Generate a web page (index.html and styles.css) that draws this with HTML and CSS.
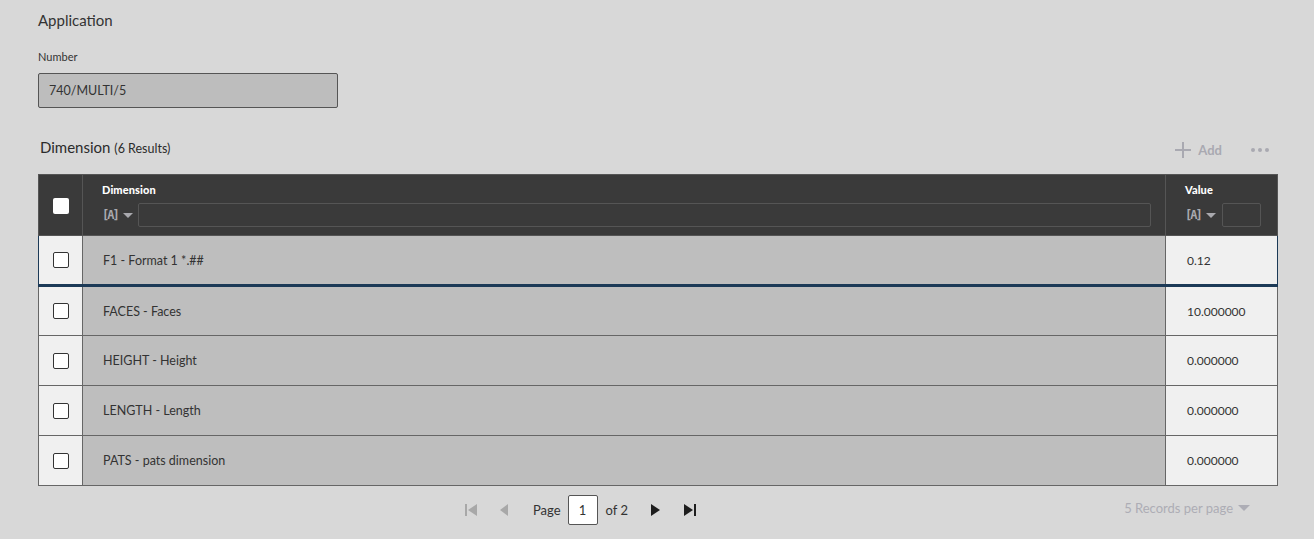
FILE: index.html
```html
<!DOCTYPE html>
<html>
<head>
<meta charset="utf-8">
<link rel="stylesheet" href="styles.css">
</head>
<body>
<div class="page">
  <h1 class="title">Application</h1>
  <label class="field-label">Number</label>
  <div class="field-input">740/MULTI/5</div>

  <div class="grid-bar">
    <div class="grid-title">Dimension <span class="count">(6 Results)</span></div>
    <div class="grid-actions">
      <span class="add">
        <svg width="18" height="18" viewBox="0 0 18 18"><path d="M9 1v16M1 9h16" stroke="#a9a9b1" stroke-width="2" fill="none"/></svg>
        Add
      </span>
      <span class="more">
        <svg width="20" height="6" viewBox="0 0 20 6"><circle cx="3" cy="3" r="2" fill="#a9a9b1"/><circle cx="10" cy="3" r="2" fill="#a9a9b1"/><circle cx="17" cy="3" r="2" fill="#a9a9b1"/></svg>
      </span>
    </div>
  </div>

  <table class="grid">
    <thead>
      <tr>
        <th class="c-check"><span class="hbox"></span></th>
        <th class="c-dim">
          <div class="h-label">Dimension</div>
          <div class="h-filter"><span class="fa">[A]</span><span class="tri"></span><span class="finput wide"></span></div>
        </th>
        <th class="c-val">
          <div class="h-label">Value</div>
          <div class="h-filter"><span class="fa">[A]</span><span class="tri"></span><span class="finput small"></span></div>
        </th>
      </tr>
    </thead>
    <tbody>
      <tr class="selected">
        <td class="c-check"><span class="box"></span></td>
        <td class="c-dim">F1 - Format 1 *.##</td>
        <td class="c-val">0.12</td>
      </tr>
      <tr>
        <td class="c-check"><span class="box"></span></td>
        <td class="c-dim">FACES - Faces</td>
        <td class="c-val">10.000000</td>
      </tr>
      <tr>
        <td class="c-check"><span class="box"></span></td>
        <td class="c-dim">HEIGHT - Height</td>
        <td class="c-val">0.000000</td>
      </tr>
      <tr>
        <td class="c-check"><span class="box"></span></td>
        <td class="c-dim">LENGTH - Length</td>
        <td class="c-val">0.000000</td>
      </tr>
      <tr>
        <td class="c-check"><span class="box"></span></td>
        <td class="c-dim">PATS - pats dimension</td>
        <td class="c-val">0.000000</td>
      </tr>
    </tbody>
  </table>

  <div class="pager">
    <div class="pager-center">
      <svg class="pi" width="12" height="12" viewBox="0 0 12 12"><rect x="0" y="0" width="2" height="12" fill="#a8a8a8"/><path d="M12 0v12L3 6z" fill="#a8a8a8"/></svg>
      <svg class="pi prev" width="8" height="12" viewBox="0 0 8 12"><path d="M8 0v12L0 6z" fill="#a8a8a8"/></svg>
      <span class="ptext">Page</span>
      <span class="pinput">1</span>
      <span class="ptext">of 2</span>
      <svg class="pi next" width="9" height="12" viewBox="0 0 9 12"><path d="M0 0v12L9 6z" fill="#1e1e1e"/></svg>
      <svg class="pi last" width="12" height="12" viewBox="0 0 12 12"><path d="M0 0v12L9 6z" fill="#1e1e1e"/><rect x="10" y="0" width="2" height="12" fill="#1e1e1e"/></svg>
    </div>
    <div class="per-page">5 Records per page <span class="tri light"></span></div>
  </div>
</div>
</body>
</html>
```

FILE: styles.css
```css
* { box-sizing: border-box; }
html, body { margin: 0; padding: 0; }
body {
  background: #d8d8d8;
  font-family: "Source Sans Pro", Lato, "Noto Sans", sans-serif;
  color: #333;
  width: 1314px;
  height: 539px;
  overflow: hidden;
}
.page {
  padding: 10px 36px 0 38px;
}
.title {
  margin: 0;
  font-size: 15px;
  font-weight: normal;
  line-height: 20px;
  color: #333;
}
.field-label {
  display: block;
  margin-top: 19px;
  font-size: 11px;
  line-height: 15px;
  color: #333;
}
.field-input {
  margin-top: 9px;
  width: 300px;
  height: 35px;
  background: #bdbdbd;
  border: 1px solid #555;
  border-radius: 2px;
  padding: 0 10px;
  font-size: 12.5px;
  line-height: 33px;
  color: #333;
}
.grid-bar {
  display: flex;
  justify-content: space-between;
  align-items: center;
  margin-top: 26px;
  height: 26px;
  padding-left: 2px;
}
.grid-title {
  font-size: 15px;
  color: #2b2b2b;
}
.count { font-size: 12.5px; }
.grid-actions {
  display: flex;
  align-items: center;
  gap: 28px;
  padding-right: 8px;
  padding-top: 6px;
}
.add {
  display: flex;
  align-items: center;
  gap: 6px;
  font-size: 13px;
  font-weight: bold;
  color: #a9a9b1;
}
.more { display: flex; align-items: center; }
.grid {
  margin-top: 14px;
  width: 1240px;
  border-collapse: collapse;
  table-layout: fixed;
}
.grid th {
  background: #3a3a3a;
  color: #fff;
  text-align: left;
  vertical-align: top;
  height: 61px;
  padding: 0;
  border: 1px solid #555;
}
.grid thead tr { border: 1px solid #3a3a3a; }
.c-check { width: 44px; }
.c-val { width: 112px; }
th.c-check { vertical-align: middle !important; text-align: center !important; }
.hbox {
  display: inline-block;
  width: 16px;
  height: 16px;
  background: #fff;
  border-radius: 2px;
  margin-top: 4px;
}
th.c-dim { padding: 8px 14px 0 19px !important; }
th.c-val { padding: 8px 16px 0 19px !important; }
.h-label {
  font-size: 11px;
  font-weight: 900;
  line-height: 13px;
  letter-spacing: 0.1px;
}
.h-filter {
  display: flex;
  align-items: center;
  margin-top: 7px;
  height: 24px;
}
.fa {
  font-family: "DejaVu Sans Mono", monospace;
  font-size: 12px;
  font-weight: bold;
  color: #a9a9ae;
  letter-spacing: -2px;
}
.tri {
  display: inline-block;
  width: 0;
  height: 0;
  border-left: 5px solid transparent;
  border-right: 5px solid transparent;
  border-top: 5px solid #a9a9ae;
  margin-left: 5px;
}
.finput {
  display: block;
  height: 24px;
  border: 1px solid #555;
  border-radius: 2px;
  margin-left: 5px;
}
.finput.wide { flex: 1; }
.finput.small { width: 44px; margin-left: 6px; }
.grid td {
  height: 50px;
  border: 1px solid #666;
  padding: 0;
  font-size: 12.5px;
  color: #333;
  vertical-align: middle;
}
.grid td.c-check { background: #f0f0f0; text-align: center; }
.grid td.c-dim { background: #bebebe; padding-left: 20px; }
.grid td.c-val { background: #f0f0f0; padding-left: 21px; font-size: 12px; }
.box {
  display: inline-block;
  width: 16px;
  height: 16px;
  background: #fff;
  border: 1px solid #333;
  border-radius: 2px;
  vertical-align: middle;
}
.grid tr.selected td {
  border-top: 1px solid #1c3a57;
  border-bottom: 3px solid #1c3a57;
}
.grid tr.selected td.c-check { border-left: 1px solid #1c3a57; }
.grid tr.selected td.c-val { border-right: 1px solid #1c3a57; }
.pager {
  position: relative;
  display: flex;
  align-items: center;
  height: 48px;
  width: 1240px;
  padding-left: 427px;
}
.pager-center {
  display: flex;
  align-items: center;
}
.pi { display: block; }
.prev { margin-left: 23px; }
.ptext { font-size: 13px; color: #333; }
.prev + .ptext { margin-left: 25px; }
.pinput {
  display: inline-block;
  width: 30px;
  height: 30px;
  margin: 0 8px 0 7px;
  background: #fff;
  border: 1px solid #555;
  border-radius: 2px;
  text-align: center;
  line-height: 28px;
  font-size: 13px;
}
.next { margin-left: 23px; }
.last { margin-left: 24px; }
.per-page {
  position: absolute;
  right: 28px;
  top: 14px;
  font-size: 13px;
  color: #adadb5;
  display: flex;
  align-items: center;
}
.tri.light { border-top-color: #adadb5; border-left-width: 6px; border-right-width: 6px; border-top-width: 6px; margin-left: 5px; }
```
